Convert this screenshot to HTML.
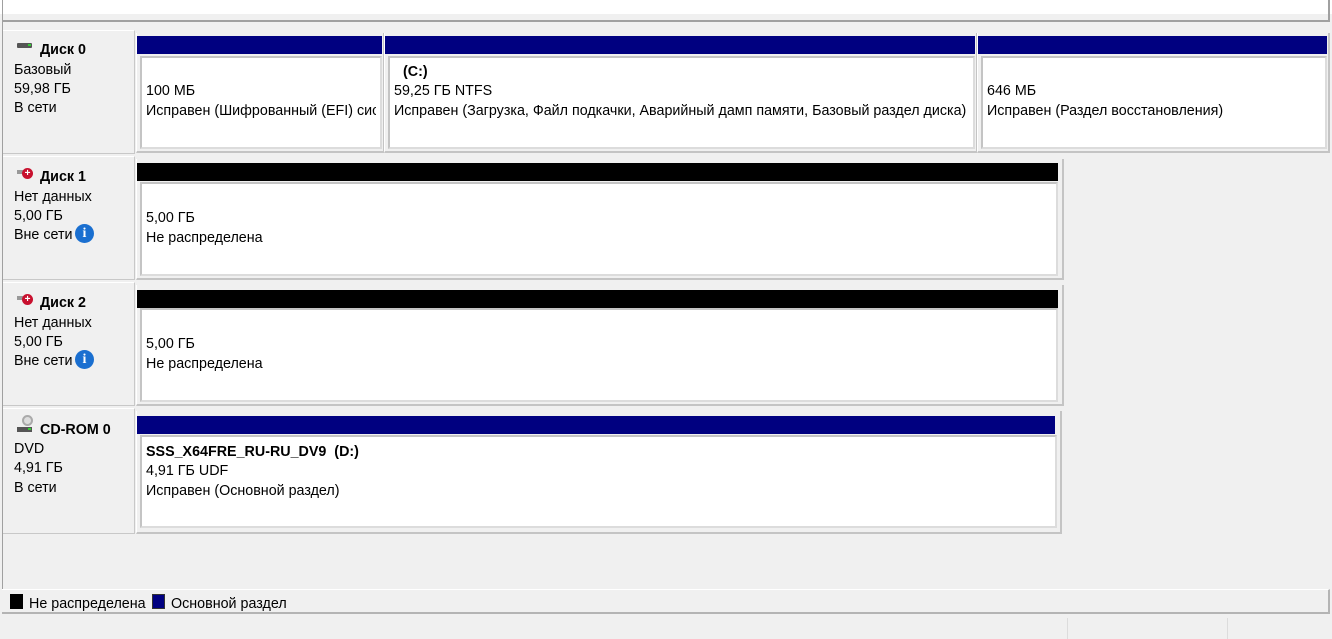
<!DOCTYPE html>
<html><head><meta charset="utf-8"><style>
*{margin:0;padding:0;box-sizing:border-box}
body{width:1332px;height:639px;background:#f0f0f0;font-family:"Liberation Sans",sans-serif;font-size:14.3px;color:#000;position:relative;overflow:hidden}
.a{position:absolute}
.t{position:absolute;white-space:nowrap;line-height:17px;margin-top:1px}
.lbl{position:absolute;left:3px;width:132px;background:#f0f0f0;border-right:1px solid #c8c8c8;border-bottom:1px solid #c8c8c8;border-top:1px solid #fff}
.grp{position:absolute;border-right:2px solid #c4c4c4;border-bottom:2px solid #c4c4c4;border-left:1px solid #fff}
.bar{position:absolute;height:18px}
.nv{background:#000080}
.bk{background:#000}
.box{position:absolute;background:#fff;border-left:2px solid #c4c4c4;border-top:2px solid #c4c4c4;border-right:2px solid #dcdcdc;border-bottom:2px solid #dcdcdc}
.b{font-weight:bold}
.info{position:absolute;width:19px;height:19px;border-radius:50%;background:#1a6fd0;color:#fff;font-weight:bold;font-size:14px;text-align:center;line-height:19px;font-family:"Liberation Serif",serif}
</style></head><body>
<div class="a" style="left:0;top:0;width:1332px;height:14px;background:#fff"></div>
<div class="a" style="left:2px;top:0;width:1px;height:590px;background:#a0a0a0"></div>
<div class="a" style="left:1328px;top:0;width:2px;height:22px;background:#a0a0a0"></div>
<div class="a" style="left:2px;top:20px;width:1328px;height:2px;background:#a0a0a0"></div>

<!-- Disk 0 -->
<div class="lbl" style="top:30px;height:124px"></div>
<div class="a" style="left:17px;top:43px;width:15px;height:5px;background:#555;border-radius:1px"></div>
<div class="a" style="left:28px;top:44px;width:3px;height:2px;background:#3c3"></div>
<div class="t b" style="left:40px;top:41px">Диск 0</div>
<div class="t" style="left:14px;top:61px">Базовый</div>
<div class="t" style="left:14px;top:80px">59,98 ГБ</div>
<div class="t" style="left:14px;top:99px">В сети</div>
<div class="grp" style="left:136px;top:33px;width:249px;height:120px"></div>
<div class="bar nv" style="left:137px;top:36px;width:245px"></div>
<div class="box" style="left:140px;top:56px;width:242px;height:93px"></div>
<div class="t" style="left:146px;top:82px">100 МБ</div>
<div class="t" style="left:146px;top:102px;width:230px;overflow:hidden">Исправен (Шифрованный (EFI) сис</div>
<div class="grp" style="left:384px;top:33px;width:594px;height:120px"></div>
<div class="bar nv" style="left:385px;top:36px;width:590px"></div>
<div class="box" style="left:388px;top:56px;width:587px;height:93px"></div>
<div class="t b" style="left:403px;top:63px">(C:)</div>
<div class="t" style="left:394px;top:82px">59,25 ГБ NTFS</div>
<div class="t" style="left:394px;top:102px">Исправен (Загрузка, Файл подкачки, Аварийный дамп памяти, Базовый раздел диска)</div>
<div class="grp" style="left:977px;top:33px;width:353px;height:120px"></div>
<div class="bar nv" style="left:978px;top:36px;width:349px"></div>
<div class="box" style="left:981px;top:56px;width:346px;height:93px"></div>
<div class="t" style="left:987px;top:82px">646 МБ</div>
<div class="t" style="left:987px;top:102px">Исправен (Раздел восстановления)</div>

<!-- Disk 1 -->
<div class="lbl" style="top:156px;height:124px"></div>
<div class="a" style="left:17px;top:170px;width:8px;height:4px;background:#999"></div>
<div class="a" style="left:22px;top:168px;width:11px;height:11px;border-radius:50%;background:#c8102e;color:#fff;font-size:10px;line-height:11px;text-align:center;font-weight:bold">+</div>
<div class="t b" style="left:40px;top:168px">Диск 1</div>
<div class="t" style="left:14px;top:188px">Нет данных</div>
<div class="t" style="left:14px;top:207px">5,00 ГБ</div>
<div class="t" style="left:14px;top:226px">Вне сети</div>
<div class="info" style="left:75px;top:224px">i</div>
<div class="grp" style="left:136px;top:159px;width:928px;height:121px"></div>
<div class="bar bk" style="left:137px;top:163px;width:921px"></div>
<div class="box" style="left:140px;top:182px;width:918px;height:94px"></div>
<div class="t" style="left:146px;top:209px">5,00 ГБ</div>
<div class="t" style="left:146px;top:229px">Не распределена</div>

<!-- Disk 2 -->
<div class="lbl" style="top:282px;height:124px"></div>
<div class="a" style="left:17px;top:296px;width:8px;height:4px;background:#999"></div>
<div class="a" style="left:22px;top:294px;width:11px;height:11px;border-radius:50%;background:#c8102e;color:#fff;font-size:10px;line-height:11px;text-align:center;font-weight:bold">+</div>
<div class="t b" style="left:40px;top:294px">Диск 2</div>
<div class="t" style="left:14px;top:314px">Нет данных</div>
<div class="t" style="left:14px;top:333px">5,00 ГБ</div>
<div class="t" style="left:14px;top:352px">Вне сети</div>
<div class="info" style="left:75px;top:350px">i</div>
<div class="grp" style="left:136px;top:285px;width:928px;height:121px"></div>
<div class="bar bk" style="left:137px;top:290px;width:921px"></div>
<div class="box" style="left:140px;top:308px;width:918px;height:94px"></div>
<div class="t" style="left:146px;top:335px">5,00 ГБ</div>
<div class="t" style="left:146px;top:355px">Не распределена</div>

<!-- CD-ROM -->
<div class="lbl" style="top:408px;height:126px"></div>
<div class="a" style="left:22px;top:415px;width:11px;height:11px;border-radius:50%;border:2px solid #aaa;background:#ddd"></div>
<div class="a" style="left:17px;top:427px;width:15px;height:5px;background:#555"></div>
<div class="a" style="left:28px;top:428px;width:3px;height:2px;background:#3c3"></div>
<div class="t b" style="left:40px;top:421px">CD-ROM 0</div>
<div class="t" style="left:14px;top:440px">DVD</div>
<div class="t" style="left:14px;top:459px">4,91 ГБ</div>
<div class="t" style="left:14px;top:479px">В сети</div>
<div class="grp" style="left:136px;top:411px;width:926px;height:123px"></div>
<div class="bar nv" style="left:137px;top:416px;width:918px"></div>
<div class="box" style="left:140px;top:435px;width:917px;height:93px"></div>
<div class="t b" style="left:146px;top:443px">SSS_X64FRE_RU-RU_DV9&nbsp; (D:)</div>
<div class="t" style="left:146px;top:462px">4,91 ГБ UDF</div>
<div class="t" style="left:146px;top:482px">Исправен (Основной раздел)</div>

<!-- Legend -->
<div class="a" style="left:2px;top:589px;width:1328px;height:25px;border-top:1px solid #fff;border-bottom:2px solid #b4b4b4;border-right:2px solid #b4b4b4"></div>
<div class="a" style="left:10px;top:594px;width:13px;height:15px;background:#000"></div>
<div class="t" style="left:29px;top:595px">Не распределена</div>
<div class="a" style="left:152px;top:594px;width:13px;height:15px;background:#000080;border:1px solid #333"></div>
<div class="t" style="left:171px;top:595px">Основной раздел</div>
<div class="a" style="left:1067px;top:618px;width:1px;height:21px;background:#dcdcdc"></div>
<div class="a" style="left:1227px;top:618px;width:1px;height:21px;background:#dcdcdc"></div>
</body></html>
